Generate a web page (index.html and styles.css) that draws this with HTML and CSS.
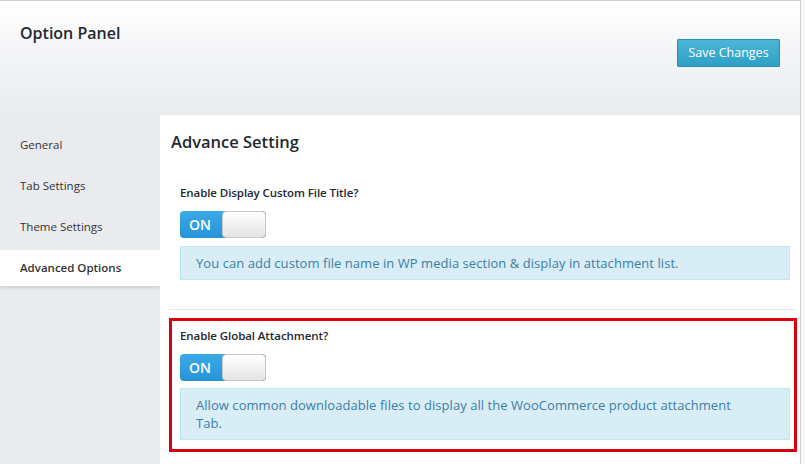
FILE: index.html
```html
<!DOCTYPE html>
<html>
<head>
<meta charset="utf-8">
<link rel="stylesheet" href="styles.css">
</head>
<body>
<div class="panel">
  <header class="panel-header">
    <h1 class="panel-title">Option Panel</h1>
    <button class="save-btn">Save Changes</button>
  </header>
  <div class="panel-body">
    <nav class="sidebar">
      <a class="nav-item">General</a>
      <a class="nav-item">Tab Settings</a>
      <a class="nav-item">Theme Settings</a>
      <a class="nav-item active">Advanced Options</a>
    </nav>
    <main class="content">
      <h2 class="content-title">Advance Setting</h2>
      <section class="field">
        <div class="field-label">Enable Display Custom File Title?</div>
        <div class="toggle"><span class="toggle-on">ON</span><span class="toggle-knob"></span></div>
        <div class="info">You can add custom file name in WP media section &amp; display in attachment list.</div>
      </section>
      <section class="field field-highlight">
        <div class="field-label">Enable Global Attachment?</div>
        <div class="toggle"><span class="toggle-on">ON</span><span class="toggle-knob"></span></div>
        <div class="info info-wide">Allow common downloadable files to display all the WooCommerce product attachment Tab.</div>
      </section>
    </main>
  </div>
</div>
</body>
</html>
```
FILE: styles.css
```css
* { box-sizing: border-box; }
html, body { margin: 0; padding: 0; }
body {
  background: #f7f7f7;
  font-family: "Open Sans", "Noto Sans", sans-serif;
  color: #333;
  height: 464px;
  overflow: hidden;
}
.panel {
  width: 801px;
  border-top: 1px solid #cfcfcf;
  border-right: 1px solid #cfcfcf;
  background: #fff;
  height: 464px;
  display: flex;
  flex-direction: column;
}
.panel-header {
  height: 114px;
  flex: none;
  display: flex;
  justify-content: space-between;
  align-items: flex-start;
  padding: 0 20px 0 20px;
  background: linear-gradient(to bottom, #ffffff 0%, #f3f4f6 50%, #e9ebef 100%);
}
.panel-title {
  margin: 22px 0 0 0;
  font-size: 16px;
  line-height: 20px;
  font-weight: 600;
  color: #23282d;
}
.save-btn {
  margin-top: 38px;
  width: 103px;
  height: 28px;
  padding: 0;
  border: 1px solid #2a8fb3;
  border-radius: 1px;
  background: linear-gradient(to bottom, #4bb6d8 0%, #2e9fc5 100%);
  color: #fff;
  font-family: "Open Sans", "Noto Sans", sans-serif;
  font-size: 12.5px;
  line-height: 26px;
}
.panel-body {
  flex: 1;
  display: flex;
}
.sidebar {
  width: 160px;
  flex: none;
  background: #e9ebef;
  padding-top: 12px;
  display: flex;
  flex-direction: column;
  gap: 5px;
}
.nav-item {
  display: block;
  height: 36px;
  line-height: 36px;
  padding-left: 20px;
  font-size: 11.5px;
  color: #333;
}
.nav-item.active {
  background: #fff;
  font-weight: 600;
  box-shadow: 0 2px 3px rgba(0,0,0,0.12);
}
.content {
  flex: 1;
  background: #fff;
  padding: 0 5px 0 9px;
}
.content-title {
  margin: 15px 0 17px 2px;
  font-size: 16.5px;
  line-height: 24px;
  font-weight: 600;
  color: #23282d;
}
.field {
  padding: 14px 5px 29px 11px;
  border-bottom: 1px solid #e3e5e9;
}
.field-label {
  font-size: 11.5px;
  line-height: 16px;
  font-weight: 600;
  letter-spacing: -0.08px;
  color: #23282d;
  margin-bottom: 10px;
}
.toggle {
  width: 86px;
  height: 27px;
  display: flex;
  border-radius: 4px;
  margin-bottom: 8px;
  background: linear-gradient(to bottom, #3caae8, #2593d7);
}
.toggle-on {
  width: 42px;
  color: #fff;
  font-weight: 600;
  font-size: 14px;
  line-height: 27px;
  padding-left: 9px;
}
.toggle-knob {
  flex: 1;
  border: 1px solid #c9c9c9;
  border-radius: 4px;
  background: linear-gradient(to bottom, #ffffff, #e4e4e4);
}
.info {
  background: #d9edf7;
  border: 1px solid #bce8f1;
  color: #3b7ea3;
  font-size: 13px;
  line-height: 18px;
  padding: 7px 35px 7px 15px;
  letter-spacing: 0.05px;
}
.field-highlight {
  margin: 8px -2px 0 0;
  border: 3px solid #d8000c;
  padding: 7px 4px 9px 8px;
}
.field-highlight .toggle { margin-bottom: 7px; }
```
